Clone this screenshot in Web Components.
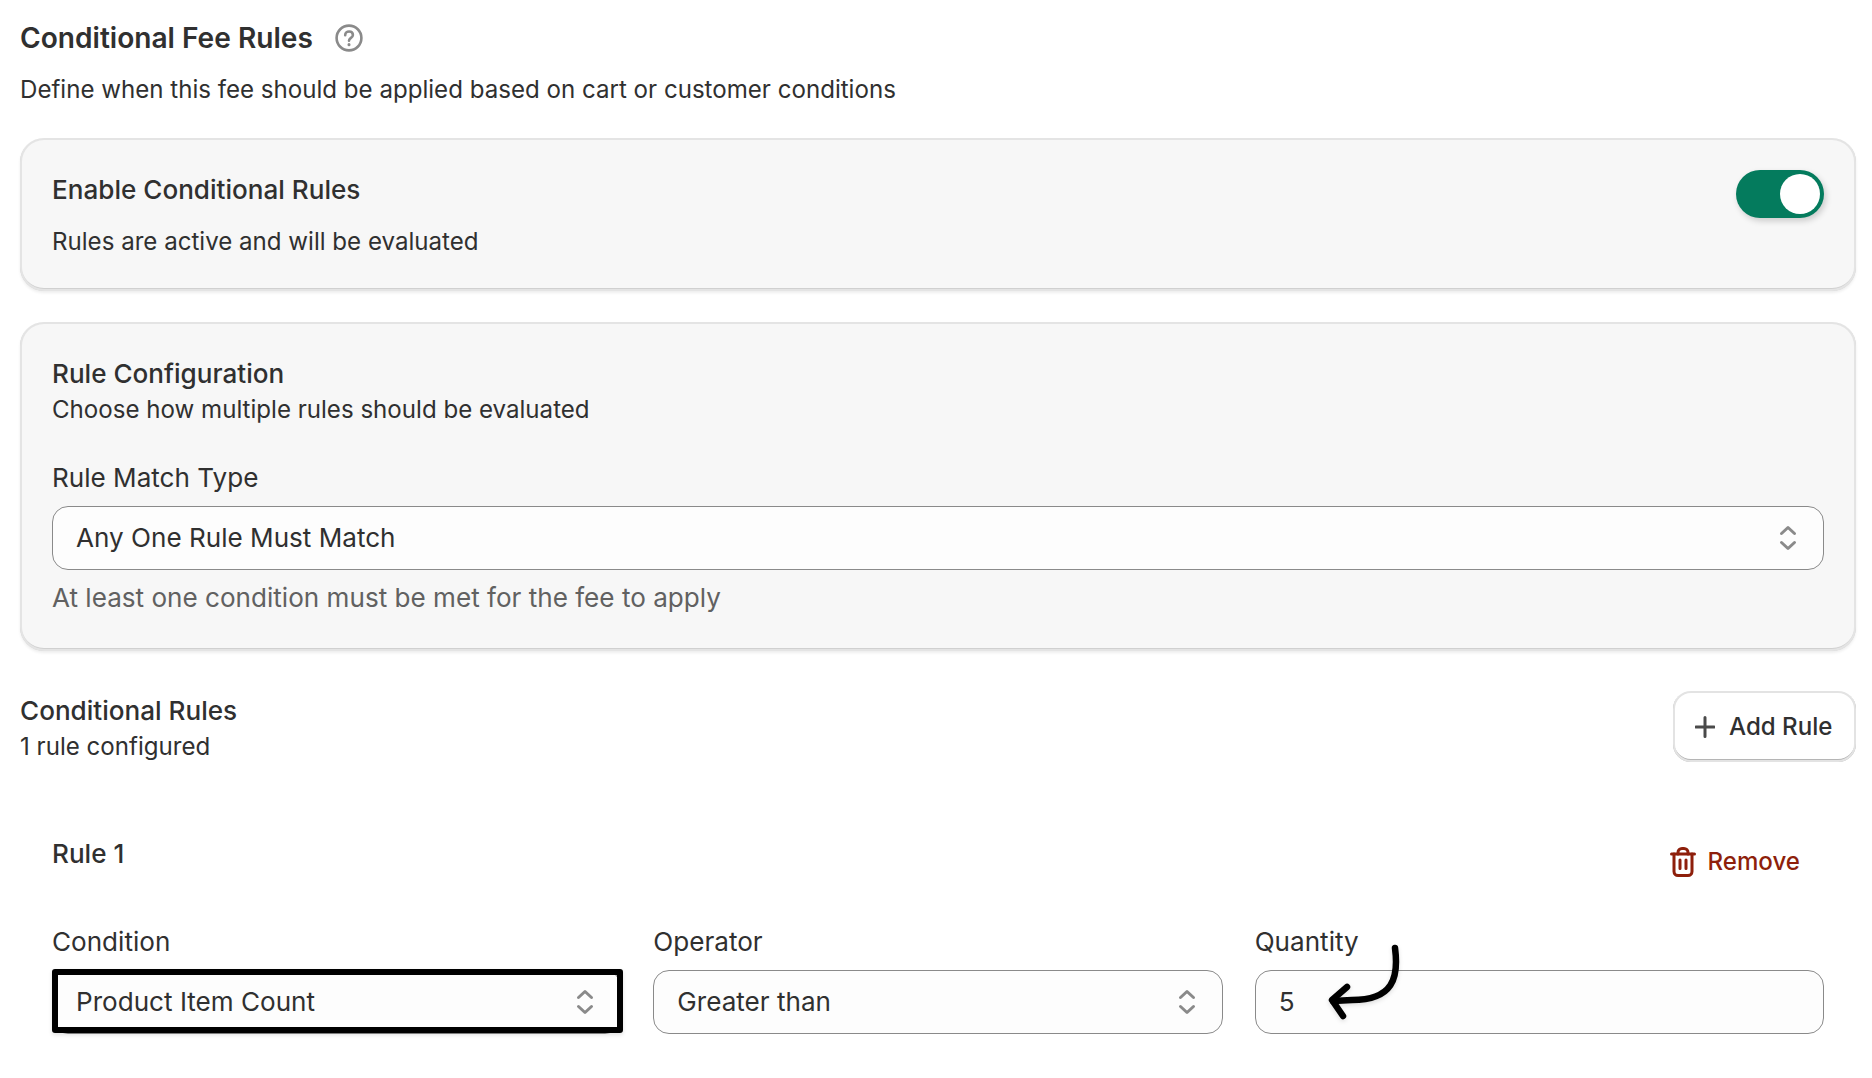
<!DOCTYPE html>
<html>
<head>
<meta charset="utf-8">
<style>
  html, body { margin: 0; background: #fff; }
  body { font: 24.1px/36px Inter, "Liberation Sans", sans-serif; color: #303030; }
</style>
</head>
<body>
<template id="fee-page-tpl">
  <style>
    :host { display: block; position: relative; height: 1078px; box-sizing: border-box; padding: 20px 16px 0 20px; overflow: hidden; }
    .stack { display: flex; flex-direction: column; }
    .arrow { position: absolute; left: 0; top: 0; pointer-events: none; filter: drop-shadow(0 2px 2px rgba(0,0,0,.12)); }
  </style>
  <div class="stack"><slot></slot></div>
  <svg class="arrow" width="1872" height="1078" fill="none" stroke="#000" stroke-width="6.5" stroke-linecap="round" stroke-linejoin="round">
    <path d="M1395 948C1399 978 1393 1000 1352 1000L1333 1001"/>
    <path d="M1347 987L1332 1000L1343 1016"/>
  </svg>
</template>

<template id="fee-heading-tpl">
  <style>
    :host { display: flex; align-items: center; height: 36px; font-size: 28.1px; font-weight: 600; line-height: 36px; }
    svg { margin-left: 22px; flex: none; }
  </style>
  <slot></slot>
  <svg width="28" height="28" viewBox="0 0 28 28" fill="none" stroke="#8a8a8a" stroke-width="2.6" stroke-linecap="round">
    <circle cx="14" cy="14" r="12.4"/>
    <path d="M10.2 11.2c0-2.2 1.7-3.7 3.9-3.7s3.8 1.4 3.8 3.4c0 2.9-3.9 3-3.9 5.8"/>
    <path d="M14 20.6v.1" stroke-width="3"/>
  </svg>
</template>

<template id="fee-card-tpl">
  <style>
    :host { display: block; background: #f7f7f7; border-radius: 24px; padding: 34px 32px 31px; position: relative;
      box-shadow: inset 0 0 0 2px #e4e4e4, inset 0 -2px 0 1px #d0d0d0, 0 2px 3px rgba(0,0,0,.07); }
  </style>
  <slot></slot>
</template>

<template id="fee-toggle-tpl">
  <style>
    :host { display: block; width: 88px; height: 48px; flex: none; position: relative; border-radius: 24px; background: #047b5d;
      box-shadow: 2px 3px 6px rgba(0,0,0,.18); }
    .knob { position: absolute; right: 4px; top: 4px; width: 40px; height: 40px; border-radius: 50%; background: #fff; }
  </style>
  <div class="knob"></div>
</template>

<template id="fee-select-tpl">
  <style>
    :host { display: flex; align-items: center; justify-content: space-between; box-sizing: border-box; height: 64px; padding: 0 26px 0 23px;
      background: #fdfdfd; border: 1px solid #8a8a8a; border-radius: 16px; font-size: 26.1px; }
    svg { flex: none; }
  </style>
  <slot></slot>
  <svg width="18" height="26" viewBox="0 0 18 26" fill="none" stroke="#8a8a8a" stroke-width="3" stroke-linecap="round" stroke-linejoin="round">
    <path d="M2.5 8.5L9 2.5L15.5 8.5"/>
    <path d="M2.5 17.5L9 23.5L15.5 17.5"/>
  </svg>
</template>

<template id="fee-input-tpl">
  <style>
    :host { display: flex; align-items: center; box-sizing: border-box; height: 64px; padding: 0 23px; background: #fdfdfd; border: 1px solid #8a8a8a; border-radius: 16px; font-size: 26.1px; }
  </style>
  <slot></slot>
</template>

<template id="fee-button-tpl">
  <style>
    :host { display: flex; align-items: center; gap: 14px; box-sizing: border-box; width: 183px; height: 71px; padding: 0 22px; background: #fff; font-weight: 500; border-radius: 18px; flex: none;
      box-shadow: inset 0 0 0 2px #e3e3e3, inset 0 -2px 0 1px #b5b5b5; }
  </style>
  <svg width="20" height="22" viewBox="0 0 20 22" fill="none" stroke="#4a4a4a" stroke-width="3" stroke-linecap="round"><path d="M10 1.5v19M.9 11h18.2"/></svg>
  <slot></slot>
</template>

<template id="fee-remove-tpl">
  <style>
    :host { display: flex; align-items: center; gap: 12px; color: #8e1f0b; font-weight: 500; padding: 0 24px 0 0; height: 36px; }
  </style>
  <svg width="26" height="30" viewBox="0 0 26 30" fill="none" stroke="#8e1f0b" stroke-width="3" stroke-linecap="round" stroke-linejoin="round">
    <path d="M1.5 7h23"/>
    <path d="M8 7V5.5a4 4 0 0 1 4-4h2a4 4 0 0 1 4 4V7"/>
    <path d="M4 7v17.5a4 4 0 0 0 4 4h10a4 4 0 0 0 4-4V7"/>
    <path d="M10 13v8.5M16 13v8.5"/>
  </svg>
  <slot></slot>
</template>

<template id="fee-field-tpl">
  <style>
    :host { display: flex; flex-direction: column; gap: 10px; min-width: 0; position: relative; font-size: 26.1px; }
    .mark { position: absolute; left: 0; right: -2px; bottom: 1px; height: 64px; box-sizing: border-box; border: 6px solid #000; border-radius: 3px; display: none; box-shadow: 0 2px 4px rgba(0,0,0,.12); }
    :host([marked]) .mark { display: block; }
  </style>
  <div><slot name="label"></slot></div>
  <slot></slot>
  <div class="mark"></div>
</template>

<script>
  function simple(tag) {
    customElements.define(tag, class extends HTMLElement {
      constructor() {
        super()
        this.attachShadow({ mode: 'open' })
        this.shadowRoot.appendChild(document.getElementById(tag + '-tpl').content.cloneNode(true))
      }
    })
  }
  ;['fee-page', 'fee-heading', 'fee-card', 'fee-toggle', 'fee-select', 'fee-input', 'fee-button', 'fee-remove', 'fee-field'].forEach(simple)
</script>

<style>
  .desc { margin: 16px 0 30px; }
  .row { display: flex; justify-content: space-between; align-items: flex-start; }
  .medium { font-weight: 500; font-size: 26.1px; }
  .mt16 { margin-top: 16px; }
  .toggle-row fee-toggle { margin: -2px 0 0; }
  .label-gap { margin-top: 32px; }
  .hint { margin-top: 10px; color: #616161; font-size: 26.1px; }
  .rules-head { margin-top: 42px; }
  .rules-head fee-button { margin-top: -2px; }
  .rule { padding: 71px 32px 0; }
  .rule .row fee-remove { margin-top: 8px; }
  .grid { display: grid; grid-template-columns: repeat(3, 1fr); gap: 32px; margin-top: 44px; }
</style>

<fee-page>
  <fee-heading>Conditional Fee Rules</fee-heading>
  <div class="desc">Define when this fee should be applied based on cart or customer conditions</div>

  <fee-card>
    <div class="row toggle-row">
      <div>
        <div class="medium">Enable Conditional Rules</div>
        <div class="mt16">Rules are active and will be evaluated</div>
      </div>
      <fee-toggle></fee-toggle>
    </div>
  </fee-card>

  <fee-card style="margin-top:31px;padding-bottom:35px">
    <div class="medium">Rule Configuration</div>
    <div>Choose how multiple rules should be evaluated</div>
    <fee-field class="label-gap">
      <span slot="label">Rule Match Type</span>
      <fee-select>Any One Rule Must Match</fee-select>
    </fee-field>
    <div class="hint">At least one condition must be met for the fee to apply</div>
  </fee-card>

  <div class="row rules-head">
    <div>
      <div class="medium">Conditional Rules</div>
      <div>1 rule configured</div>
    </div>
    <fee-button>Add Rule</fee-button>
  </div>

  <div class="rule">
    <div class="row">
      <div class="medium">Rule 1</div>
      <fee-remove>Remove</fee-remove>
    </div>
    <div class="grid">
      <fee-field marked>
        <span slot="label">Condition</span>
        <fee-select>Product Item Count</fee-select>
      </fee-field>
      <fee-field>
        <span slot="label">Operator</span>
        <fee-select>Greater than</fee-select>
      </fee-field>
      <fee-field>
        <span slot="label">Quantity</span>
        <fee-input>5</fee-input>
      </fee-field>
    </div>
  </div>
</fee-page>
</body>
</html>
